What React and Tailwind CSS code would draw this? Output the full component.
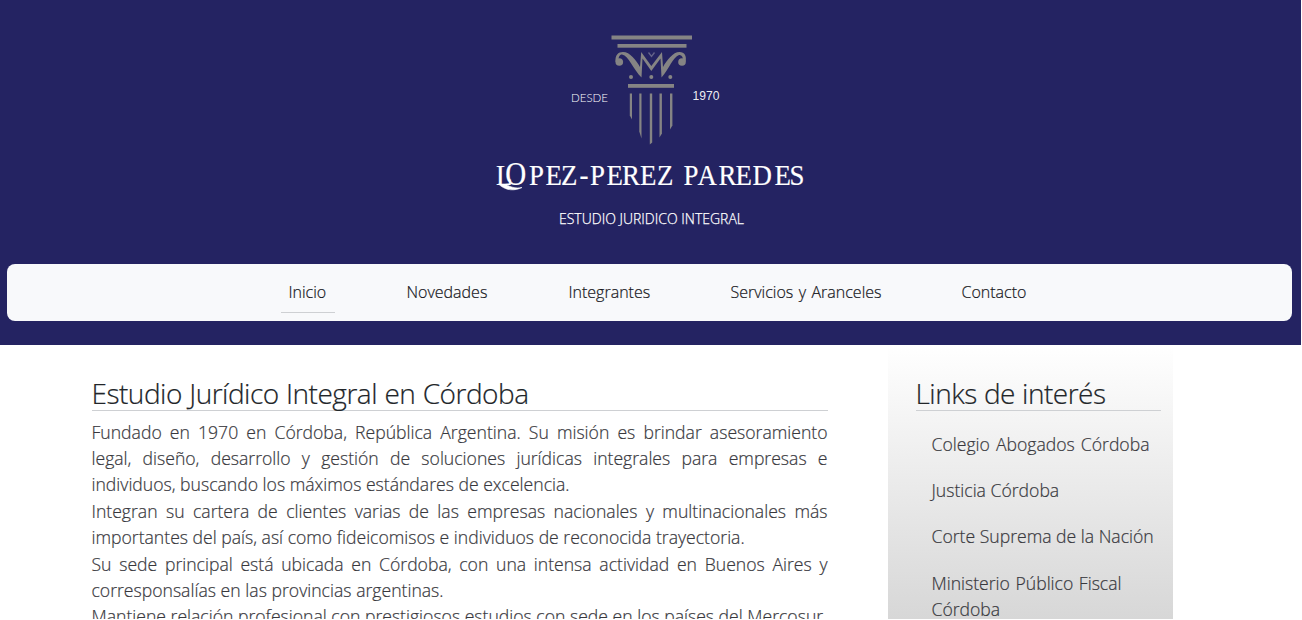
const navItems = [
  { label: "Inicio", width: "w-[54px]", active: true },
  { label: "Novedades", width: "w-[98px]" },
  { label: "Integrantes", width: "w-[98px]" },
  { label: "Servicios y Aranceles", width: "w-[167px]" },
  { label: "Contacto", width: "w-[81px]" },
];

const lines = [
  ["Fundado en 1970 en Córdoba, República Argentina. Su misión es brindar asesoramiento", "w-[736px]"],
  ["legal, diseño, desarrollo y gestión de soluciones jurídicas integrales para empresas e", "w-[736px]"],
  ["individuos, buscando los máximos estándares de excelencia.", "w-[478px]"],
  ["Integran su cartera de clientes varias de las empresas nacionales y multinacionales más", "w-[736px]"],
  ["importantes del país, así como fideicomisos e individuos de reconocida trayectoria.", "w-[652px]"],
  ["Su sede principal está ubicada en Córdoba, con una intensa actividad en Buenos Aires y", "w-[736px]"],
  ["corresponsalías en las provincias argentinas.", "w-[352px]"],
  ["Mantiene relación profesional con prestigiosos estudios con sede en los países del Mercosur,", "w-[733px]"],
];

const links = [
  [["Colegio Abogados Córdoba", "w-[218px]"]],
  [["Justicia Córdoba", "w-[127px]"]],
  [["Corte Suprema de la Nación", "w-[221px]"]],
  [["Ministerio Público Fiscal", "w-[190px]"], ["Córdoba", "w-[68px]"]],
];

// Left edge of each wordmark letter, before the horizontal condensing.
const condensed = (xs) => xs.map((x) => (x / 0.88).toFixed(1)).join(" ");
const letterX = condensed([529, 545.5, 561, 579.5, 590, 606.5, 622, 640, 657, 674, 683.5, 697.5, 718.5, 735.5, 752.5, 774.5, 789.5]);

function Line({ text, width }) {
  return <span className={`block whitespace-nowrap [text-align-last:justify] ${width}`}>{text}</span>;
}

function Logo() {
  return (
    <svg width="320" height="210" viewBox="490 30 320 210" className="block">
      <g fill="#858484">
        <rect x="611.5" y="35.5" width="80.5" height="4" />
        <rect x="617.5" y="44" width="69" height="3.7" />
        <rect x="628" y="84" width="46" height="3.8" />
        <circle cx="631" cy="77" r="2" />
        <circle cx="651.3" cy="77" r="2" />
        <circle cx="670.3" cy="77" r="2" />
        <circle cx="619.3" cy="62" r="3.8" />
        <circle cx="682" cy="62" r="3.8" />
        <path d="M629.8 93.500h2.200v26l-2.200-4z" />
        <path d="M639.3 93.500h2.200v45l-2.200-7z" />
        <path d="M649.8 93.500h2.400v49l-2.400 2z" />
        <path d="M659.5 93.500h2.400v40l-2.400 4z" />
        <path d="M670 93.500h2.400v32l-2.400 4z" />
        <path d="M615.5 62C615 55 618 52 623 52C630 52 636 60 640 67L641.200 52L651.300 66L662 52L663 67C667 60 673 52 679.500 52C684.500 52 687 56 685.500 62L683 60C683 57 681.500 54.500 679 55C673 57 669 69 661.500 77.500L660.500 58.500L651.300 71L642.500 58.500L641.500 77.500C633 69 629 56 622 54.500C619.500 54.500 618.500 57 618.500 60Z" />
      </g>
      <path d="M648.500 52.500l3 4 3-4" fill="none" stroke="#65648a" strokeWidth="1.3" />
      <g fill="#fff">
        <text x="571" y="102" fontSize="11.5" fontFamily="Lato, sans-serif" fontWeight="300" textLength="37" lengthAdjust="spacingAndGlyphs">DESDE</text>
        <text x="692.5" y="100" fontSize="12" fontFamily="Liberation Sans, sans-serif" fillOpacity="0.93" textLength="27" lengthAdjust="spacingAndGlyphs">1970</text>
        <text y="185.500" transform="scale(0.88 1)" fontSize="30.500" fontFamily="Liberation Serif, serif" stroke="#fff" strokeWidth="0.200">
          <tspan x={condensed([496])}>L</tspan><tspan x={condensed([505.3])} fontSize="33">O</tspan><tspan x={letterX}>PEZ-PEREZ PAREDES</tspan>
        </text>
        <text x="559" y="224" fontSize="14.500" fontFamily="Open Sans, sans-serif" fontWeight="300" stroke="#fff" strokeWidth="0.250" textLength="185" lengthAdjust="spacingAndGlyphs">ESTUDIO JURIDICO INTEGRAL</text>
      </g>
      <path d="M499 184.500C506 191 515 191 522 187.500C515 189 510 186.500 506 184.500Z" fill="#fff" stroke="#fff" strokeWidth="0.600" />
    </svg>
  );
}

export default function App() {
  return (
    <div className="h-[620px] w-[1302px] overflow-hidden bg-white font-['Open_Sans',sans-serif] font-light [-webkit-text-stroke-width:0.2px]">
      <header className="flex h-[345px] w-[1301px] flex-col bg-[#242362] pt-[30px]">
        <div className="h-[234px] pl-[490px]">
          <Logo />
        </div>
        <nav className="ml-[7px] flex h-[57px] w-[1285px] gap-16 rounded-lg bg-[#f8f9fb] pt-2 pl-[273.5px]">
          {navItems.map((item) => (
            <a key={item.label} className={`h-[41px] px-2 pt-2 text-base leading-6 text-[#17171c] ${item.width} ${item.active ? "border-b border-[#ced0d3]" : ""}`}>
              <Line text={item.label} width="w-full" />
            </a>
          ))}
        </nav>
      </header>
      <div className="flex h-[274px] overflow-hidden pl-[91.5px]">
        <main className="w-[736px] shrink-0 pt-8">
          <h1 className="mb-2 h-[34px] border-b border-[#ced0d3] text-[28px] leading-[33px] tracking-[-0.5px] text-[#212529]">
            <Line text="Estudio Jurídico Integral en Córdoba" width="w-[437px]" />
          </h1>
          <p className="-mt-[0.4px] text-[17.6px] leading-[26.4px] text-[#38383d]">
            {lines.map(([text, width]) => <Line key={text} text={text} width={width} />)}
          </p>
        </main>
        <aside className="ml-[60px] w-[285px] shrink-0 bg-linear-to-b from-white to-[#d7d7d7] pt-8 pl-7">
          <h2 className="h-[34px] w-[245px] border-b border-[#ced0d3] text-[28px] leading-[33px] tracking-[-0.5px] text-[#212529]">
            <Line text="Links de interés" width="w-[190px]" />
          </h2>
          <ul className="flex flex-col gap-5 pt-[19.6px] pl-4 text-[17.6px] leading-[26.4px] text-[#38383d]">
            {links.map((rows) => (
              <li key={rows[0][0]}>
                {rows.map(([text, width]) => <Line key={text} text={text} width={width} />)}
              </li>
            ))}
          </ul>
        </aside>
      </div>
    </div>
  );
}
